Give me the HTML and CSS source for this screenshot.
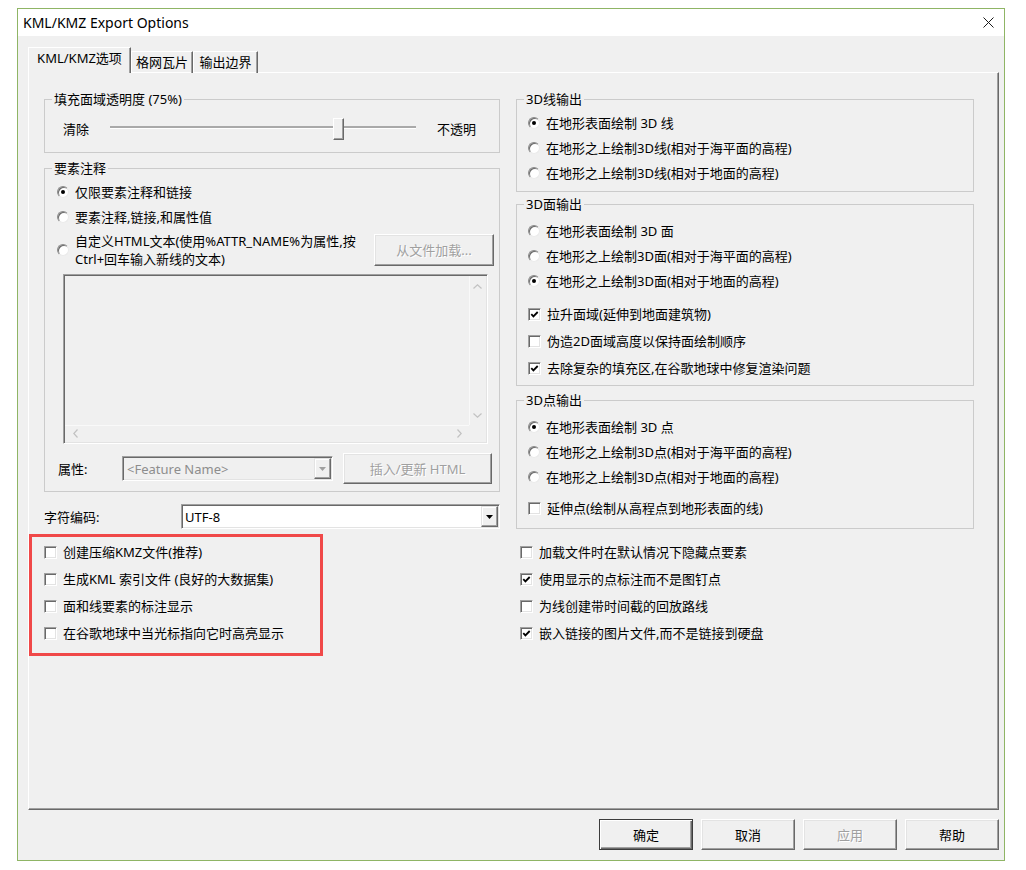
FILE: index.html
```html
<!DOCTYPE html>
<html lang="zh-CN">
<head>
<meta charset="utf-8">
<title>KML/KMZ Export Options</title>
<link rel="stylesheet" href="styles.css">
</head>
<body>
<div class="dialog">
  <div class="titlebar">
    <span class="title">KML/KMZ Export Options</span>
    <svg class="close" width="11" height="11" viewBox="0 0 11 11"><path d="M0.5 0.5L10.5 10.5M10.5 0.5L0.5 10.5" stroke="#1a1a1a" stroke-width="1" fill="none"/></svg>
  </div>
  <div class="body">
    <div class="tabs">
      <div class="tab active">KML/KMZ选项</div>
      <div class="tab t2">格网瓦片</div>
      <div class="tab t3">输出边界</div>
    </div>
    <div class="panel">
      <div class="grid">
        <div class="col">
          <fieldset class="group">
            <legend>填充面域透明度 (75%)</legend>
            <div class="gi g1i">
              <span>清除</span>
              <div class="slider"><div class="track"></div><div class="thumb"></div></div>
              <span>不透明</span>
            </div>
          </fieldset>
          <fieldset class="group g2">
            <legend>要素注释</legend>
            <div class="gi g2i">
              <div class="opt"><span class="rb on"></span>仅限要素注释和链接</div>
              <div class="opt gap9"><span class="rb"></span>要素注释,链接,和属性值</div>
              <div class="opt3">
                <span class="rb"></span>
                <span class="lbl2">自定义HTML文本(使用%ATTR_NAME%为属性,按<br>Ctrl+回车输入新线的文本)</span>
                <div class="btn dis load">从文件加载...</div>
              </div>
              <div class="memo sunk">
                <div class="memo-area"></div>
                <div class="vscroll">
                  <div class="arr"><svg width="9" height="5" viewBox="0 0 9 5"><polyline points="0.5,4.5 4.5,0.8 8.5,4.5" fill="none" stroke="#c2c2c2" stroke-width="1.2"/></svg></div>
                  <div class="arr"><svg width="9" height="5" viewBox="0 0 9 5"><polyline points="0.5,0.5 4.5,4.2 8.5,0.5" fill="none" stroke="#c2c2c2" stroke-width="1.2"/></svg></div>
                </div>
                <div class="hscroll">
                  <div class="arrh"><svg width="5" height="9" viewBox="0 0 5 9"><polyline points="4.5,0.5 0.8,4.5 4.5,8.5" fill="none" stroke="#c2c2c2" stroke-width="1.2"/></svg></div>
                  <div class="arrh"><svg width="5" height="9" viewBox="0 0 5 9"><polyline points="0.5,0.5 4.2,4.5 0.5,8.5" fill="none" stroke="#c2c2c2" stroke-width="1.2"/></svg></div>
                </div>
                <div class="corner"></div>
              </div>
              <div class="attr">
                <span class="lbl">属性:</span>
                <div class="combo sunk dis">
                  <span class="ctext">&lt;Feature Name&gt;</span>
                  <span class="drop"><svg width="7" height="4" viewBox="0 0 7 4"><polygon points="0,0 7,0 3.5,4" fill="#a0a0a0"/></svg></span>
                </div>
                <div class="btn dis insert">插入/更新 HTML</div>
              </div>
            </div>
          </fieldset>
          <div class="charset">
            <span class="lbl">字符编码:</span>
            <div class="combo sunk en">
              <span class="ctext">UTF-8</span>
              <span class="drop"><svg width="7" height="4" viewBox="0 0 7 4"><polygon points="0,0 7,0 3.5,4" fill="#000"/></svg></span>
            </div>
          </div>
        </div>

        <div class="col">
          <fieldset class="group">
            <legend>3D线输出</legend>
            <div class="gi r1i">
              <div class="opt"><span class="rb on"></span>在地形表面绘制 3D 线</div>
              <div class="opt gap9"><span class="rb"></span>在地形之上绘制3D线(相对于海平面的高程)</div>
              <div class="opt gap9"><span class="rb"></span>在地形之上绘制3D线(相对于地面的高程)</div>
            </div>
          </fieldset>
          <fieldset class="group r2">
            <legend>3D面输出</legend>
            <div class="gi r2i">
              <div class="opt"><span class="rb"></span>在地形表面绘制 3D 面</div>
              <div class="opt gap9"><span class="rb"></span>在地形之上绘制3D面(相对于海平面的高程)</div>
              <div class="opt gap9"><span class="rb on"></span>在地形之上绘制3D面(相对于地面的高程)</div>
              <div class="opt gap17"><span class="cb on"><svg width="9" height="9" viewBox="0 0 9 9"><path d="M1.3 4.2 L3.4 6.4 L7.7 2" fill="none" stroke="#000" stroke-width="1.8"/></svg></span>拉升面域(延伸到地面建筑物)</div>
              <div class="opt gap11"><span class="cb"></span>伪造2D面域高度以保持面绘制顺序</div>
              <div class="opt gap11"><span class="cb on"><svg width="9" height="9" viewBox="0 0 9 9"><path d="M1.3 4.2 L3.4 6.4 L7.7 2" fill="none" stroke="#000" stroke-width="1.8"/></svg></span>去除复杂的填充区,在谷歌地球中修复渲染问题</div>
            </div>
          </fieldset>
          <fieldset class="group r3">
            <legend>3D点输出</legend>
            <div class="gi r3i">
              <div class="opt"><span class="rb on"></span>在地形表面绘制 3D 点</div>
              <div class="opt gap9"><span class="rb"></span>在地形之上绘制3D点(相对于海平面的高程)</div>
              <div class="opt gap9"><span class="rb"></span>在地形之上绘制3D点(相对于地面的高程)</div>
              <div class="opt gap15"><span class="cb"></span>延伸点(绘制从高程点到地形表面的线)</div>
            </div>
          </fieldset>
        </div>

        <div class="redbox">
          <div class="opt"><span class="cb"></span>创建压缩KMZ文件(推荐)</div>
          <div class="opt"><span class="cb"></span>生成KML 索引文件 (良好的大数据集)</div>
          <div class="opt"><span class="cb"></span>面和线要素的标注显示</div>
          <div class="opt"><span class="cb"></span>在谷歌地球中当光标指向它时高亮显示</div>
        </div>
        <div class="rlist">
          <div class="opt"><span class="cb"></span>加载文件时在默认情况下隐藏点要素</div>
          <div class="opt"><span class="cb on"><svg width="9" height="9" viewBox="0 0 9 9"><path d="M1.3 4.2 L3.4 6.4 L7.7 2" fill="none" stroke="#000" stroke-width="1.8"/></svg></span>使用显示的点标注而不是图钉点</div>
          <div class="opt"><span class="cb"></span>为线创建带时间截的回放路线</div>
          <div class="opt"><span class="cb on"><svg width="9" height="9" viewBox="0 0 9 9"><path d="M1.3 4.2 L3.4 6.4 L7.7 2" fill="none" stroke="#000" stroke-width="1.8"/></svg></span>嵌入链接的图片文件,而不是链接到硬盘</div>
        </div>
      </div>
    </div>
    <div class="buttons">
      <div class="btn def">确定</div>
      <div class="btn">取消</div>
      <div class="btn dis">应用</div>
      <div class="btn">帮助</div>
    </div>
  </div>
</div>
</body>
</html>
```
FILE: styles.css
```css
* { box-sizing: border-box; }

body {
  margin: 0;
  background: #fff;
  font-family: "Noto Sans", "Noto Sans CJK SC", sans-serif;
  font-size: 13px;
  line-height: 16px;
  color: #000;
}

.dialog {
  margin: 8px 0 0 17px;
  width: 988px;
  height: 853px;
  border: 1px solid #8fb565;
  background: #f0f0f0;
  display: flex;
  flex-direction: column;
}

.titlebar {
  flex: none;
  height: 27px;
  background: #fff;
  display: flex;
  align-items: center;
  justify-content: space-between;
  padding: 0 10px 0 5px;
}
.title { font-size: 14px; }
.close { display: block; }

.body {
  flex: 1;
  display: flex;
  flex-direction: column;
  padding: 11px 5px 10px 10px;
}

/* tabs */
.tabs {
  flex: none;
  display: flex;
  align-items: flex-end;
  height: 26px;
  margin-bottom: -1px;
  position: relative;
  z-index: 1;
}
.tab {
  height: 22px;
  padding-top: 2px;
  text-align: center;
  white-space: nowrap;
  border-top: 1px solid #fff;
  border-left: 1px solid #fff;
  border-right: 1px solid #696969;
  box-shadow: inset -1px 0 #a0a0a0;
}
.tab.active { height: 26px; width: 103px; background: #f0f0f0; }
.tab.t2 { width: 62px; }
.tab.t3 { width: 65px; }

.panel {
  flex: 1;
  border: 1px solid;
  border-color: #fff #696969 #696969 #fff;
  box-shadow: inset -1px -1px #a0a0a0;
  padding: 18px 0 0 15px;
}

.grid {
  display: grid;
  grid-template-columns: 456px 458px;
  column-gap: 16px;
  row-gap: 5px;
  align-items: start;
}
.col { display: flex; flex-direction: column; }

/* group boxes */
.group {
  margin: 0;
  padding: 0;
  min-width: 0;
  border: 1px solid #cbcbcb;
}
.group legend {
  margin-left: 7px;
  padding: 0 2px;
  line-height: 16px;
}
.g2 { margin-top: 7px; }
.r2 { margin-top: 4px; }
.r3 { margin-top: 6px; }

.g1i {
  display: flex;
  align-items: center;
  padding: 11px 0 12px 18px;
}
.slider {
  position: relative;
  width: 306px;
  height: 22px;
  margin: 0 21px;
}
.track {
  position: absolute;
  left: 0;
  right: 0;
  top: 8px;
  height: 3px;
  border-top: 2px solid #a9a9a9;
  border-bottom: 1px solid #fff;
}
.thumb {
  position: absolute;
  left: 223px;
  top: 0;
  width: 11px;
  height: 22px;
  background: #f0f0f0;
  border: 1px solid;
  border-color: #fff #696969 #696969 #fff;
  box-shadow: inset -1px -1px #a0a0a0;
}

.g2i { padding: 8px 5px 7px 12px; }
.r1i { padding: 8px 0 10px 11px; }
.r2i { padding: 11px 0 9px 11px; }
.r3i { padding: 11px 0 12px 11px; }

.opt {
  display: flex;
  align-items: center;
  height: 16px;
  white-space: nowrap;
}
.gap9 { margin-top: 9px; }
.gap11 { margin-top: 11px; }
.gap15 { margin-top: 15px; }
.gap17 { margin-top: 17px; }

/* radio & checkbox */
.rb {
  flex: none;
  width: 12px;
  height: 12px;
  margin-right: 6px;
  border-radius: 50%;
  border: 1px solid;
  border-color: #8a8a8a #eaeaea #eaeaea #8a8a8a;
  box-shadow: inset 1px 1px 0 #6a6a6a;
  background: #fff;
  display: flex;
  align-items: center;
  justify-content: center;
}
.rb.on::after {
  content: "";
  width: 4px;
  height: 4px;
  border-radius: 50%;
  background: #000;
}
.cb {
  flex: none;
  width: 13px;
  height: 13px;
  margin-right: 6px;
  border: 1px solid;
  border-color: #a0a0a0 #fff #fff #a0a0a0;
  box-shadow: inset 1px 1px #696969, inset -1px -1px #e3e3e3;
  background: #fff;
  display: flex;
  align-items: center;
  justify-content: center;
}
.cb svg { display: block; }

/* buttons */
.btn {
  flex: none;
  display: flex;
  align-items: center;
  justify-content: center;
  white-space: nowrap;
  background: #f0f0f0;
  border: 1px solid;
  border-color: #fff #696969 #696969 #fff;
  box-shadow: inset -1px -1px #a0a0a0, inset 1px 1px #e3e3e3;
}
.btn.dis { color: #a0a0a0; text-shadow: 1px 1px 0 #fff; }
.btn.def {
  border-color: #3c3c3c;
  box-shadow: inset 1px 1px #fff, inset -1px -1px #696969, inset -2px -2px #a0a0a0;
}

.opt3 {
  display: flex;
  align-items: center;
  height: 36px;
  margin-top: 7px;
}
.lbl2 { line-height: 18px; white-space: nowrap; }
.btn.load { width: 120px; height: 32px; margin-left: auto; }

/* sunken fields */
.sunk {
  border: 1px solid;
  border-color: #a0a0a0 #fff #fff #a0a0a0;
  box-shadow: inset 1px 1px #696969, inset -1px -1px #e3e3e3;
}

.memo {
  width: 425px;
  height: 170px;
  margin: 6px 0 0 6px;
  padding: 1px;
  display: grid;
  grid-template-columns: 1fr 17px;
  grid-template-rows: 1fr 17px;
  background: #f0f0f0;
}
.memo-area { background: #f0f0f0; }
.vscroll {
  display: flex;
  flex-direction: column;
  justify-content: space-between;
  background: #f0f0f0;
  box-shadow: inset 1px 0 #f9f9f9;
}
.hscroll {
  display: flex;
  justify-content: space-between;
  background: #f0f0f0;
  box-shadow: inset 0 1px #f9f9f9;
}
.corner { background: #f0f0f0; }
.arr { height: 20px; display: flex; align-items: center; justify-content: center; }
.arrh { width: 20px; display: flex; align-items: center; justify-content: center; }
.arr svg, .arrh svg { display: block; }

.attr {
  display: flex;
  align-items: center;
  height: 31px;
  margin-top: 9px;
}
.attr .lbl { width: 64px; margin-left: 1px; }

.combo {
  display: flex;
  height: 25px;
}
.combo .ctext {
  flex: 1;
  display: flex;
  align-items: center;
  white-space: nowrap;
}
.combo .drop {
  flex: none;
  width: 17px;
  margin: 1px 1px 1px 0;
  background: #f0f0f0;
  border: 1px solid;
  border-color: #e3e3e3 #696969 #696969 #e3e3e3;
  box-shadow: inset -1px -1px #a0a0a0, inset 1px 1px #fff;
  display: flex;
  align-items: center;
  justify-content: center;
}
.combo .drop svg { display: block; }
.combo.dis { width: 211px; background: #f0f0f0; color: #8d8d8d; }
.combo.dis .ctext { padding-left: 4px; }
.combo.en { flex: 1; background: #fff; }
.combo.en .ctext { padding-left: 3px; }
.btn.insert { width: 149px; height: 31px; margin-left: 10px; }

.charset {
  display: flex;
  align-items: center;
  height: 25px;
  margin-top: 12px;
}
.charset .lbl { width: 137px; }

/* bottom checkbox lists */
.redbox {
  margin-left: -15px;
  width: 294px;
  border: 3px solid #f04848;
  padding: 7px 0 12px 12px;
  display: flex;
  flex-direction: column;
  gap: 11px;
}
.rlist {
  padding: 10px 0 0 4px;
  display: flex;
  flex-direction: column;
  gap: 11px;
}

/* dialog buttons */
.buttons {
  flex: none;
  display: flex;
  justify-content: flex-end;
  gap: 8px;
  margin-top: 9px;
}
.buttons .btn { width: 94px; height: 31px; }
```
